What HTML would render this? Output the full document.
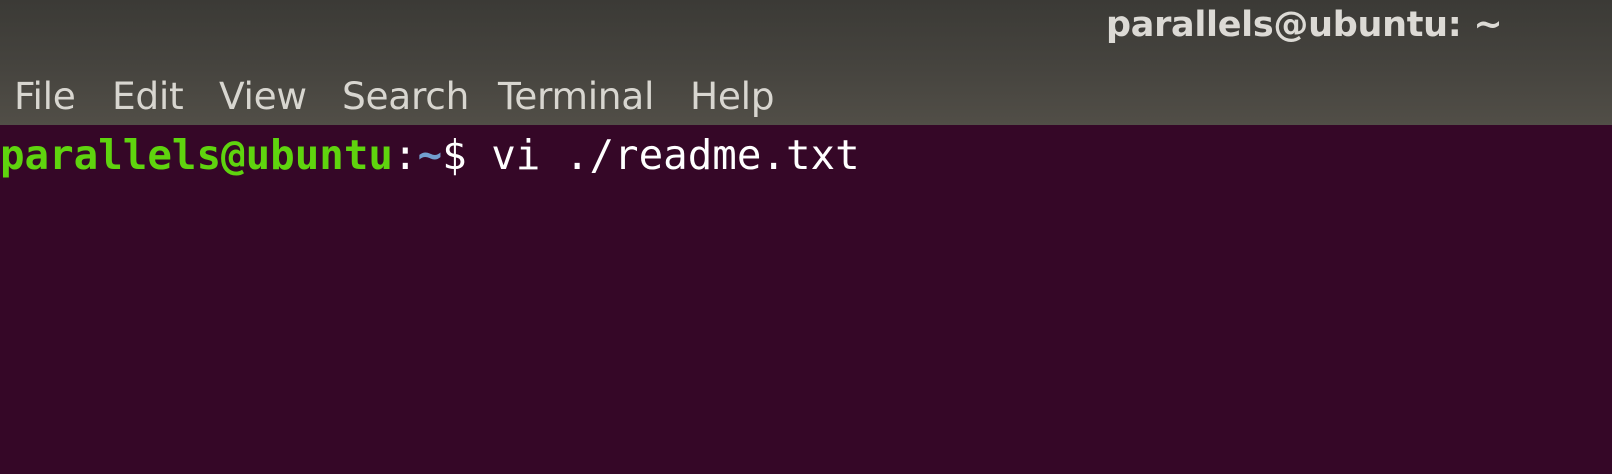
<!DOCTYPE html>
<html><head><style>
body{margin:0;width:1612px;height:474px;overflow:hidden;background:#350727;}
.hdr{position:absolute;left:0;top:0;width:1612px;height:125px;background:linear-gradient(#3b3a36,#45433e 50%,#514e47);}
.title{position:absolute;left:1106px;top:5px;font:bold 35px "DejaVu Sans","Liberation Sans",sans-serif;color:#dcdad5;letter-spacing:-0.3px;}
.menu{position:absolute;top:74px;font:37.5px "DejaVu Sans","Liberation Sans",sans-serif;color:#d8d6d0;letter-spacing:-0.3px;}
.term{position:absolute;left:0;top:131px;font:40.8px "DejaVu Sans Mono","Liberation Mono",monospace;color:#fff;white-space:pre;}
.g{color:#5fd40e;font-weight:bold}.b{color:#729fcf;font-weight:bold}
</style></head><body>
<div class="hdr"></div>
<div class="title">parallels@ubuntu: ~</div>
<div class="menu" style="left:14px">File</div>
<div class="menu" style="left:112px">Edit</div>
<div class="menu" style="left:219px">View</div>
<div class="menu" style="left:342px">Search</div>
<div class="menu" style="left:498px">Terminal</div>
<div class="menu" style="left:690px">Help</div>
<div class="term"><span class="g">parallels@ubuntu</span>:<span class="b">~</span>$ vi ./readme.txt</div>
</body></html>
